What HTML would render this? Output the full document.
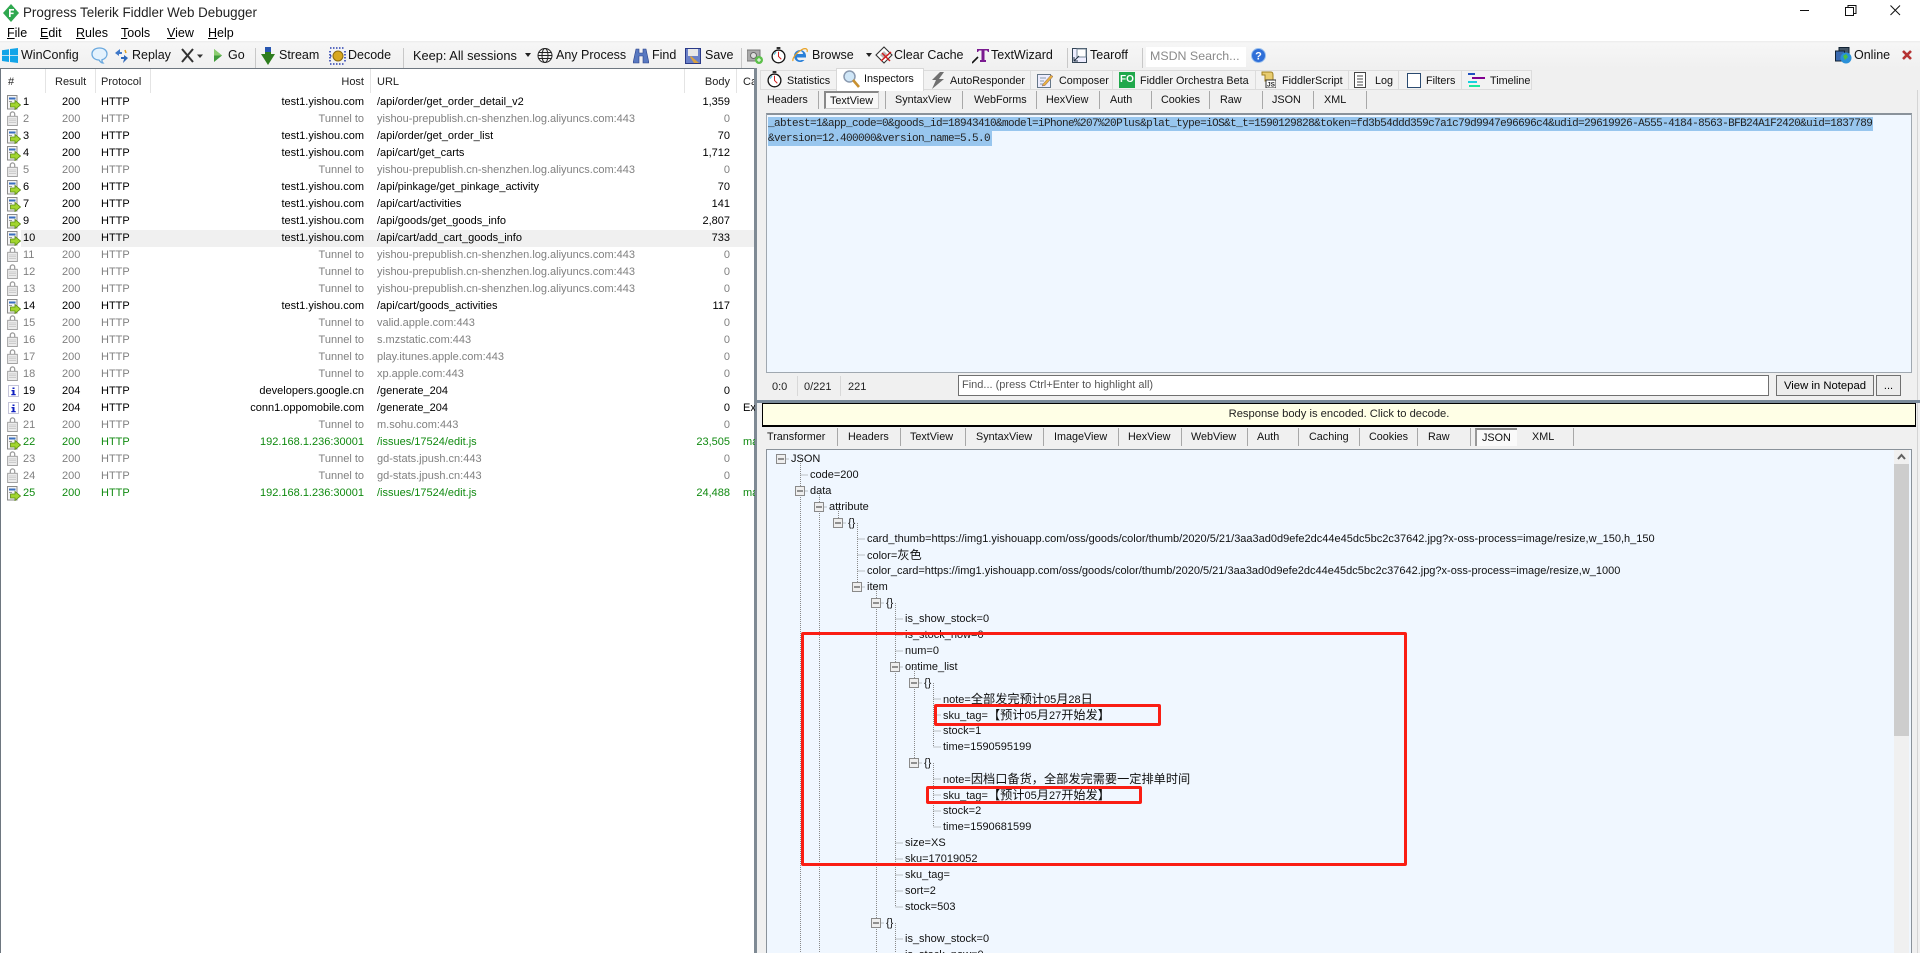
<!DOCTYPE html>
<html><head><meta charset="utf-8"><title>Progress Telerik Fiddler Web Debugger</title>
<style>
html,body{margin:0;padding:0;background:#fff;width:1920px;height:953px;overflow:hidden}
body{position:relative;font:11px/16px "Liberation Sans","Noto Sans CJK SC",sans-serif;color:#000}
div,span,svg{position:absolute}
i{font-style:normal;font-size:12.200px}
u{text-decoration:underline}
.t{white-space:nowrap;height:16px}
.tb{font-size:12.5px;color:#111;top:47px;white-space:nowrap}
.m{font-size:12.5px;top:25px;white-space:nowrap}
.tab{font-size:10.8px;top:73px;white-space:nowrap;color:#111}
.st{font-size:10.8px;top:92px;white-space:nowrap;color:#111}
.rt{font-size:10.8px;top:429px;white-space:nowrap;color:#111}
.sep{width:1px;background:#a8a8a8}
.tsep{width:1px;background:#c8c8c8;top:48px;height:20px}
.hs{top:69px;width:1px;height:24px;background:#e4e4e4}
.hd{top:74px;white-space:nowrap;color:#222}
.r{left:0;width:755px;height:17px;line-height:17px;white-space:nowrap}
.r span{top:0}
.n{left:23px}.c{left:62px}.p{left:101px}.h{right:391px}.u{left:377px}.b{right:25px}.x{left:743px;width:12px;overflow:hidden}
.g{color:#808080}.v{color:#108a10}
.l{white-space:nowrap;font-size:11px;color:#111}
.hl{background:#98c6ee}
.mono{font:11px/14px "Liberation Mono",monospace;letter-spacing:-.6px;white-space:nowrap;color:#222}
.red{border:3px solid #fa1e14;border-radius:2px;box-sizing:border-box}
</style></head><body>

<svg width="0" height="0" style="left:0;top:0">
<defs>
<symbol id="doc" viewBox="0 0 14 15"><rect x=".5" y=".5" width="9.500" height="13.500" fill="#f4f4f4" stroke="#8a8a8a"/><rect x="2" y="2.500" width="6.500" height="2" fill="#3a6fc0"/><rect x="2" y="6" width="3" height="1" fill="#999"/><path d="M3.500 8h4.500V5.500l5.500 4.500-5.500 4.500V12H3.500z" fill="#a2d62e" stroke="#5b8a12" stroke-width=".8"/></symbol>
<symbol id="lock" viewBox="0 0 12 17"><path d="M3.500 6V3.500a2.500 2.500 0 0 1 5 0V6" fill="none" stroke="#999" stroke-width="1.4"/><rect x=".5" y="6" width="11" height="10.5" fill="#ececec" stroke="#999"/><path d="M2 9h8M2 11h8M2 13h8" stroke="#c8c8c8"/></symbol>
<symbol id="info" viewBox="0 0 11 12"><rect x=".5" y=".5" width="10" height="11" fill="#fff" stroke="#8a8ab0" stroke-dasharray="1 1"/><path d="M4.500 2.500h2v1.500h-2zM3.500 5h3v4h1.200v1.200H3.300V9h1.200V6.200h-1z" fill="#1020c0"/></symbol>
<symbol id="clock" viewBox="0 0 16 18"><rect x="6" y="0" width="4" height="2" fill="#222"/><circle cx="8" cy="10" r="6.800" fill="#fff" stroke="#111" stroke-width="1.400"/><path d="M8 5v5l3 3" fill="none" stroke="#d02020" stroke-width="1.100"/><path d="M3.500 8a5 5 0 0 1 2-2.500" stroke="#30b0d0" fill="none"/></symbol>
</defs>
</svg>

<!-- title bar -->
<svg style="left:2px;top:4px" width="18" height="18" viewBox="0 0 18 18"><path d="M9 0l8 9-8 9-8-9z" fill="#2fa84f"/><path d="M7 5h5v1.600H8.700v2H11.600v1.500H8.700V13H7z" fill="#fff"/></svg>
<div class="t" style="left:23px;font-size:13.400px;color:#222;top:5px">Progress Telerik Fiddler Web Debugger</div>
<svg style="left:1795px;top:0" width="115" height="22" viewBox="0 0 115 22" fill="none" stroke="#111"><path d="M5 10.500h9"/><path d="M50.500 7.500h8v8h-8zM53 7.500V5.500h8v8h-2.500"/><path d="M95.500 5.500l9.500 9.500M105 5.500L95.500 15"/></svg>

<!-- menu -->
<div class="m" style="left:7px"><u>F</u>ile</div>
<div class="m" style="left:40px"><u>E</u>dit</div>
<div class="m" style="left:76px"><u>R</u>ules</div>
<div class="m" style="left:121px"><u>T</u>ools</div>
<div class="m" style="left:167px"><u>V</u>iew</div>
<div class="m" style="left:208px"><u>H</u>elp</div>

<!-- toolbar background -->
<div style="left:0;top:41px;width:1920px;height:28px;background:linear-gradient(#ececec,#f6f6f6 8%,#f0f0f0)"></div>

<svg style="left:2px;top:48px" width="16" height="15" viewBox="0 0 16 15"><path d="M0 2.200l7-1v6H0zM8 1l8-1v7.200H8zM0 8h7v6l-7-1zM8 8h8v7l-8-1z" fill="#12a4e8"/></svg>
<div class="tb" style="left:21px">WinConfig</div>
<svg style="left:91px;top:47px" width="17" height="18" viewBox="0 0 17 18"><path d="M8.500 1C4 1 1 3.500 1 7s3 6 7 6c1 1.500 2.500 3 4 3-1-1-1.200-2-1-3.300 3-.8 5-3 5-5.700 0-3.500-3-6-7.500-6z" fill="#e4f2fd" stroke="#6aa8de" stroke-width="1.300"/></svg>
<svg style="left:114px;top:48px" width="15" height="16" viewBox="0 0 15 16"><path d="M6 1L1 5l4 3V6h3V4H6z" fill="#3f78c8"/><path d="M9 15l5-5-4-3v2H7v2h3z" fill="#2f68b8"/><path d="M11 2l1 3" stroke="#e0a020" stroke-width="1.500"/></svg>
<div class="tb" style="left:132px">Replay</div>
<svg style="left:181px;top:48px" width="24" height="15" viewBox="0 0 24 15"><path d="M1 1l11 13M12 1L1 14" stroke="#333" stroke-width="2"/><path d="M16 6.500h6l-3 3.500z" fill="#333"/></svg>
<svg style="left:214px;top:49px" width="8" height="13" viewBox="0 0 8 13"><path d="M0 0l8 6.500-8 6.500z" fill="#3f9a3a"/><path d="M0 0l8 6.500H0z" fill="#8ccd70"/></svg>
<div class="tb" style="left:228px">Go</div>
<div class="tsep" style="left:255px"></div>
<svg style="left:261px;top:47px" width="14" height="18" viewBox="0 0 14 18"><path d="M4 0h6v7h4l-7 11-7-11h4z" fill="#2e7d1e"/><path d="M4 0h6v5H4z" fill="#2856b0"/></svg>
<div class="tb" style="left:279px">Stream</div>
<svg style="left:329px;top:47px" width="17" height="18" viewBox="0 0 17 18"><path d="M1 1h15M1 17h15M1 4v11M16 4v11M1 9h4" stroke="#2a40b0" stroke-width="1.600" stroke-dasharray="1.500 1.500" fill="none"/><circle cx="9" cy="9" r="5" fill="#d8a820" stroke="#8a6a10"/></svg>
<div class="tb" style="left:348px">Decode</div>
<div class="tsep" style="left:403px"></div>
<div class="tb" style="left:413px;top:48px;font-size:12.800px">Keep: All sessions</div>
<svg style="left:525px;top:53px" width="6" height="5" viewBox="0 0 6 5"><path d="M0 0h6L3 4z" fill="#222"/></svg>
<svg style="left:537px;top:47px" width="16" height="17" viewBox="0 0 16 17" fill="none" stroke="#222"><circle cx="8" cy="8.500" r="7"/><ellipse cx="8" cy="8.500" rx="3" ry="7"/><path d="M1 8.500h14M2 5.500h12M2 11.500h12"/></svg>
<div class="tb" style="left:556px">Any Process</div>
<svg style="left:633px;top:48px" width="16" height="16" viewBox="0 0 16 16"><path d="M3 1h3v4h4V1h3l3 14h-6V8H6v7H0z" fill="#5878c0" stroke="#2a4088" stroke-width=".6"/></svg>
<div class="tb" style="left:652px">Find</div>
<svg style="left:685px;top:48px" width="16" height="16" viewBox="0 0 16 16"><rect x=".5" y=".5" width="15" height="15" fill="#6a80c8" stroke="#2a3a88"/><rect x="3" y="1" width="10" height="7" fill="#e8e8e8"/><path d="M6 8l8 7H9L5 9z" fill="#d8a040"/></svg>
<div class="tb" style="left:705px">Save</div>
<div class="tsep" style="left:741px"></div>
<svg style="left:747px;top:48px" width="16" height="16" viewBox="0 0 16 16"><rect x="0" y="2" width="13" height="11" fill="#aaa" stroke="#777"/><circle cx="6.500" cy="7.500" r="3" fill="#ddd" stroke="#666"/><circle cx="12" cy="12" r="4" fill="#5cc04a"/><path d="M10 12h4M12 10v4" stroke="#fff"/></svg>
<svg style="left:771px;top:47px" width="15" height="17"><use href="#clock"/></svg>
<svg style="left:792px;top:47px" width="16" height="17" viewBox="0 0 16 17"><path d="M14 8.500a6 6 0 1 0-1.500 4.500h-3a3 3 0 0 1-4.500-2.500h9zM5 7a3 3 0 0 1 6 0z" fill="#2a80d8" fill-rule="evenodd"/><path d="M1 14c-1-3 4-9 10-12 3-1 5 0 4 3" fill="none" stroke="#e8a020" stroke-width="1.200"/></svg>
<div class="tb" style="left:812px">Browse</div>
<svg style="left:866px;top:53px" width="6" height="5" viewBox="0 0 6 5"><path d="M0 0h6L3 4z" fill="#222"/></svg>
<svg style="left:875px;top:46px" width="18" height="18" viewBox="0 0 18 18"><path d="M9 1l8 8-8 8-8-8z" fill="#fff" stroke="#333" stroke-width="1.100"/><path d="M5 9l4-4 4 4-4 4z" fill="#bbb"/><path d="M6 15L16 6M7 7l8 8" stroke="#d02020" stroke-width="1.500"/></svg>
<div class="tb" style="left:894px">Clear Cache</div>
<svg style="left:972px;top:47px" width="17" height="17" viewBox="0 0 17 17"><path d="M5 2h12v3h-1l-1-1.500h-2.500V13H14v2H8v-2h1.500V3.500H7L6 5H5z" fill="#7a1a90"/><path d="M0 16l6-6" stroke="#111" stroke-width="1.600"/></svg>
<div class="tb" style="left:991px">TextWizard</div>
<div class="tsep" style="left:1067px"></div>
<svg style="left:1072px;top:48px" width="15" height="15" viewBox="0 0 15 15"><rect x=".5" y=".5" width="14" height="14" fill="#eef" stroke="#345"/><rect x="5" y="1" width="9" height="8" fill="#fff" stroke="#789"/><path d="M2 13l5-5M2 9v4h4" stroke="#234" fill="none"/></svg>
<div class="tb" style="left:1090px">Tearoff</div>
<div class="tsep" style="left:1142px"></div>
<div style="left:1146px;top:47px;width:100px;height:20px;background:#fff"></div>
<div class="tb" style="left:1150px;color:#8a8a8a;top:48px;font-size:12.400px">MSDN Search...</div>
<svg style="left:1251px;top:48px" width="15" height="15" viewBox="0 0 15 15"><circle cx="7.500" cy="7.500" r="7" fill="#2f6fd8" stroke="#9ac0ee"/><text x="7.500" y="11.500" text-anchor="middle" font-family="Liberation Sans" font-weight="bold" font-size="11" fill="#fff">?</text></svg>
<svg style="left:1835px;top:47px" width="17" height="17" viewBox="0 0 17 17"><rect x="4" y="0.500" width="10" height="12" fill="#456" stroke="#123"/><rect x="0.500" y="4" width="9" height="10" fill="#3a6ab0" stroke="#123"/><circle cx="11" cy="11" r="5.500" fill="#2a90d8"/><path d="M8 9l3-2 2 3-3 3z" fill="#4cc040"/></svg>
<div class="tb" style="left:1854px">Online</div>
<svg style="left:1902px;top:50px" width="10" height="10" viewBox="0 0 10 10"><path d="M1 1l8 8M9 1L1 9" stroke="#b53333" stroke-width="2.600"/></svg>

<!-- session list -->
<div style="left:0;top:68px;width:755px;height:885px;background:#fff;border-top:1px solid #6e7780;border-left:1px solid #6e7780;box-sizing:border-box"></div>
<div style="left:754px;top:68px;width:3px;height:885px;background:#7f8a94"></div>
<div class="hd" style="left:8px">#</div><div class="hs" style="left:45px"></div>
<div class="hd" style="left:55px">Result</div><div class="hs" style="left:95px"></div>
<div class="hd" style="left:101px">Protocol</div><div class="hs" style="left:150px"></div>
<div class="hd" style="right:1556px">Host</div><div class="hs" style="left:370px"></div>
<div class="hd" style="left:377px">URL</div><div class="hs" style="left:684px"></div>
<div class="hd" style="right:1190px">Body</div><div class="hs" style="left:736px"></div>
<div class="hd" style="left:743px;width:11px;overflow:hidden">Ca</div>

<div style="left:21px;top:230px;width:733px;height:17px;background:#f0f0f0"></div>

<svg style="left:7px;top:95px" width="14" height="15"><use href="#doc"/></svg><svg style="left:7px;top:111px" width="11" height="15"><use href="#lock"/></svg><svg style="left:7px;top:129px" width="14" height="15"><use href="#doc"/></svg><svg style="left:7px;top:146px" width="14" height="15"><use href="#doc"/></svg><svg style="left:7px;top:162px" width="11" height="15"><use href="#lock"/></svg><svg style="left:7px;top:180px" width="14" height="15"><use href="#doc"/></svg><svg style="left:7px;top:197px" width="14" height="15"><use href="#doc"/></svg><svg style="left:7px;top:214px" width="14" height="15"><use href="#doc"/></svg><svg style="left:7px;top:231px" width="14" height="15"><use href="#doc"/></svg><svg style="left:7px;top:247px" width="11" height="15"><use href="#lock"/></svg><svg style="left:7px;top:264px" width="11" height="15"><use href="#lock"/></svg><svg style="left:7px;top:281px" width="11" height="15"><use href="#lock"/></svg><svg style="left:7px;top:299px" width="14" height="15"><use href="#doc"/></svg><svg style="left:7px;top:315px" width="11" height="15"><use href="#lock"/></svg><svg style="left:7px;top:332px" width="11" height="15"><use href="#lock"/></svg><svg style="left:7px;top:349px" width="11" height="15"><use href="#lock"/></svg><svg style="left:7px;top:366px" width="11" height="15"><use href="#lock"/></svg><svg style="left:8px;top:385px" width="11" height="12"><use href="#info"/></svg><svg style="left:8px;top:402px" width="11" height="12"><use href="#info"/></svg><svg style="left:7px;top:417px" width="11" height="15"><use href="#lock"/></svg><svg style="left:7px;top:435px" width="14" height="15"><use href="#doc"/></svg><svg style="left:7px;top:451px" width="11" height="15"><use href="#lock"/></svg><svg style="left:7px;top:468px" width="11" height="15"><use href="#lock"/></svg><svg style="left:7px;top:486px" width="14" height="15"><use href="#doc"/></svg>

<div class="r" style="top:94px"><span class="n">1</span><span class="c">200</span><span class="p">HTTP</span><span class="h">test1.yishou.com</span><span class="u">/api/order/get_order_detail_v2</span><span class="b">1,359</span></div>
<div class="r g" style="top:111px"><span class="n">2</span><span class="c">200</span><span class="p">HTTP</span><span class="h">Tunnel to</span><span class="u">yishou-prepublish.cn-shenzhen.log.aliyuncs.com:443</span><span class="b">0</span></div>
<div class="r" style="top:128px"><span class="n">3</span><span class="c">200</span><span class="p">HTTP</span><span class="h">test1.yishou.com</span><span class="u">/api/order/get_order_list</span><span class="b">70</span></div>
<div class="r" style="top:145px"><span class="n">4</span><span class="c">200</span><span class="p">HTTP</span><span class="h">test1.yishou.com</span><span class="u">/api/cart/get_carts</span><span class="b">1,712</span></div>
<div class="r g" style="top:162px"><span class="n">5</span><span class="c">200</span><span class="p">HTTP</span><span class="h">Tunnel to</span><span class="u">yishou-prepublish.cn-shenzhen.log.aliyuncs.com:443</span><span class="b">0</span></div>
<div class="r" style="top:179px"><span class="n">6</span><span class="c">200</span><span class="p">HTTP</span><span class="h">test1.yishou.com</span><span class="u">/api/pinkage/get_pinkage_activity</span><span class="b">70</span></div>
<div class="r" style="top:196px"><span class="n">7</span><span class="c">200</span><span class="p">HTTP</span><span class="h">test1.yishou.com</span><span class="u">/api/cart/activities</span><span class="b">141</span></div>
<div class="r" style="top:213px"><span class="n">9</span><span class="c">200</span><span class="p">HTTP</span><span class="h">test1.yishou.com</span><span class="u">/api/goods/get_goods_info</span><span class="b">2,807</span></div>
<div class="r" style="top:230px"><span class="n">10</span><span class="c">200</span><span class="p">HTTP</span><span class="h">test1.yishou.com</span><span class="u">/api/cart/add_cart_goods_info</span><span class="b">733</span></div>
<div class="r g" style="top:247px"><span class="n">11</span><span class="c">200</span><span class="p">HTTP</span><span class="h">Tunnel to</span><span class="u">yishou-prepublish.cn-shenzhen.log.aliyuncs.com:443</span><span class="b">0</span></div>
<div class="r g" style="top:264px"><span class="n">12</span><span class="c">200</span><span class="p">HTTP</span><span class="h">Tunnel to</span><span class="u">yishou-prepublish.cn-shenzhen.log.aliyuncs.com:443</span><span class="b">0</span></div>
<div class="r g" style="top:281px"><span class="n">13</span><span class="c">200</span><span class="p">HTTP</span><span class="h">Tunnel to</span><span class="u">yishou-prepublish.cn-shenzhen.log.aliyuncs.com:443</span><span class="b">0</span></div>
<div class="r" style="top:298px"><span class="n">14</span><span class="c">200</span><span class="p">HTTP</span><span class="h">test1.yishou.com</span><span class="u">/api/cart/goods_activities</span><span class="b">117</span></div>
<div class="r g" style="top:315px"><span class="n">15</span><span class="c">200</span><span class="p">HTTP</span><span class="h">Tunnel to</span><span class="u">valid.apple.com:443</span><span class="b">0</span></div>
<div class="r g" style="top:332px"><span class="n">16</span><span class="c">200</span><span class="p">HTTP</span><span class="h">Tunnel to</span><span class="u">s.mzstatic.com:443</span><span class="b">0</span></div>
<div class="r g" style="top:349px"><span class="n">17</span><span class="c">200</span><span class="p">HTTP</span><span class="h">Tunnel to</span><span class="u">play.itunes.apple.com:443</span><span class="b">0</span></div>
<div class="r g" style="top:366px"><span class="n">18</span><span class="c">200</span><span class="p">HTTP</span><span class="h">Tunnel to</span><span class="u">xp.apple.com:443</span><span class="b">0</span></div>
<div class="r" style="top:383px"><span class="n">19</span><span class="c">204</span><span class="p">HTTP</span><span class="h">developers.google.cn</span><span class="u">/generate_204</span><span class="b">0</span></div>
<div class="r" style="top:400px"><span class="n">20</span><span class="c">204</span><span class="p">HTTP</span><span class="h">conn1.oppomobile.com</span><span class="u">/generate_204</span><span class="b">0</span><span class="x">Ex</span></div>
<div class="r g" style="top:417px"><span class="n">21</span><span class="c">200</span><span class="p">HTTP</span><span class="h">Tunnel to</span><span class="u">m.sohu.com:443</span><span class="b">0</span></div>
<div class="r v" style="top:434px"><span class="n">22</span><span class="c">200</span><span class="p">HTTP</span><span class="h">192.168.1.236:30001</span><span class="u">/issues/17524/edit.js</span><span class="b">23,505</span><span class="x">ma</span></div>
<div class="r g" style="top:451px"><span class="n">23</span><span class="c">200</span><span class="p">HTTP</span><span class="h">Tunnel to</span><span class="u">gd-stats.jpush.cn:443</span><span class="b">0</span></div>
<div class="r g" style="top:468px"><span class="n">24</span><span class="c">200</span><span class="p">HTTP</span><span class="h">Tunnel to</span><span class="u">gd-stats.jpush.cn:443</span><span class="b">0</span></div>
<div class="r v" style="top:485px"><span class="n">25</span><span class="c">200</span><span class="p">HTTP</span><span class="h">192.168.1.236:30001</span><span class="u">/issues/17524/edit.js</span><span class="b">24,488</span><span class="x">ma</span></div>

<!-- right panel -->
<div style="left:757px;top:68px;width:1163px;height:885px;background:#f0f0f0"></div>
<div style="left:1917px;top:90px;width:1px;height:863px;background:#d4d4d4"></div>
<div style="left:760px;top:70px;width:772px;height:20px;background:#f2f2f2;border:1px solid #dcdcdc;box-sizing:border-box"></div>
<div style="left:836px;top:68px;width:88px;height:23px;background:#fff;border:1px solid #d8d8d8;border-bottom:0;box-sizing:border-box"></div>
<div class="sep" style="left:1030px;top:71px;height:18px;background:#dcdcdc"></div><div class="sep" style="left:1112px;top:71px;height:18px;background:#dcdcdc"></div><div class="sep" style="left:1255px;top:71px;height:18px;background:#dcdcdc"></div><div class="sep" style="left:1348px;top:71px;height:18px;background:#dcdcdc"></div><div class="sep" style="left:1398px;top:71px;height:18px;background:#dcdcdc"></div><div class="sep" style="left:1461px;top:71px;height:18px;background:#dcdcdc"></div>

<svg style="left:767px;top:71px" width="15" height="17"><use href="#clock"/></svg>
<div class="tab" style="left:787px">Statistics</div>
<svg style="left:843px;top:70px" width="17" height="18" viewBox="0 0 17 18"><circle cx="6.500" cy="6.500" r="5.500" fill="#cfe6f7" stroke="#8a9ab0" stroke-width="1.500"/><path d="M10 10l6 7" stroke="#c89030" stroke-width="2.600"/></svg>
<div class="tab" style="left:864px;top:71px">Inspectors</div>
<svg style="left:931px;top:72px" width="14" height="17" viewBox="0 0 14 17"><path d="M9 0L1 8h4L1 17l12-10H8l5-7z" fill="#707070"/></svg>
<div class="tab" style="left:950px">AutoResponder</div>
<svg style="left:1037px;top:73px" width="16" height="15" viewBox="0 0 16 15"><rect x=".5" y="1.500" width="13" height="13" fill="#eef" stroke="#678"/><path d="M3 5h6M3 8h4M3 11h3" stroke="#89a"/><path d="M6 11l8-9 2 1.500-8 9-3 .5z" fill="#e8b040" stroke="#866"  stroke-width=".5"/></svg>
<div class="tab" style="left:1059px">Composer</div>
<div style="left:1119px;top:72px;width:16px;height:16px;background:#1fa84b;color:#fff;font:bold 10px/16px 'Liberation Sans',sans-serif;text-align:center">FO</div>
<div class="tab" style="left:1140px">Fiddler Orchestra Beta</div>
<svg style="left:1261px;top:71px" width="15" height="17" viewBox="0 0 15 17"><path d="M1 1h9c2 0 2 2 2 3v6H4V4H1z" fill="#e8cc70" stroke="#a08020"/><rect x="5" y="9" width="10" height="8" fill="#fff" stroke="#333"/><text x="10" y="15.500" text-anchor="middle" font-family="Liberation Sans" font-weight="bold" font-size="6.500" fill="#222">JS</text></svg>
<div class="tab" style="left:1282px">FiddlerScript</div>
<svg style="left:1354px;top:72px" width="12" height="16" viewBox="0 0 12 16"><rect x=".5" y=".5" width="11" height="15" fill="#fff" stroke="#444"/><path d="M3 4h6M3 7h6M3 10h6M3 13h6" stroke="#444"/></svg>
<div class="tab" style="left:1375px">Log</div>
<svg style="left:1407px;top:73px" width="14" height="15"><rect x=".5" y=".5" width="13" height="14" fill="#fff" stroke="#2a4a70"/></svg>
<div class="tab" style="left:1426px">Filters</div>
<svg style="left:1468px;top:73px" width="17" height="14"><rect x="0" y="0" width="7" height="2" fill="#2050c0"/><rect x="4" y="4" width="13" height="2" fill="#800090"/><rect x="0" y="8" width="9" height="2" fill="#18d0e0"/><rect x="1" y="12" width="11" height="2" fill="#18e8a0"/></svg>
<div class="tab" style="left:1490px">Timeline</div>

<!-- sub tabs -->
<div class="st" style="left:767px">Headers</div><div class="sep" style="left:818px;top:91px;height:18px"></div>
<div style="left:824px;top:91px;width:55px;height:18px;background:#f8f8f8;border:2px solid #888;border-right:1px solid #ccc;border-bottom:1px solid #ccc;box-sizing:border-box"></div>
<div class="st" style="left:830px;top:93px">TextView</div><div class="sep" style="left:885px;top:91px;height:18px"></div>
<div class="st" style="left:895px">SyntaxView</div><div class="sep" style="left:962px;top:91px;height:18px"></div>
<div class="st" style="left:974px">WebForms</div><div class="sep" style="left:1036px;top:91px;height:18px"></div>
<div class="st" style="left:1046px">HexView</div><div class="sep" style="left:1099px;top:91px;height:18px"></div>
<div class="st" style="left:1110px">Auth</div><div class="sep" style="left:1151px;top:91px;height:18px"></div>
<div class="st" style="left:1161px">Cookies</div><div class="sep" style="left:1209px;top:91px;height:18px"></div>
<div class="st" style="left:1220px">Raw</div><div class="sep" style="left:1262px;top:91px;height:18px"></div>
<div class="st" style="left:1272px">JSON</div><div class="sep" style="left:1313px;top:91px;height:18px"></div>
<div class="st" style="left:1324px">XML</div><div class="sep" style="left:1366px;top:91px;height:18px"></div>

<!-- request text -->
<div style="left:766px;top:113px;width:1146px;height:260px;background:#f0f7ff;border:1px solid #a0a8b0;border-top:2px solid #8a929a;box-sizing:border-box"></div>
<div class="hl" style="left:768px;top:117px;width:1105px;height:14px"></div>
<div class="hl" style="left:768px;top:131px;width:224px;height:15px"></div>
<div class="mono" style="left:768px;top:117px">_abtest=1&amp;app_code=0&amp;goods_id=18943410&amp;model=iPhone%207%20Plus&amp;plat_type=iOS&amp;t_t=1590129828&amp;token=fd3b54ddd359c7a1c79d9947e96696c4&amp;udid=29619926-A555-4184-8563-BFB24A1F2420&amp;uid=1837789</div>
<div class="mono" style="left:768px;top:132px">&amp;version=12.400000&amp;version_name=5.5.0</div>

<!-- status row -->
<div class="t" style="left:772px;top:379px;color:#222">0:0</div><div class="sep" style="left:797px;top:376px;height:20px;background:#d8d8d8"></div>
<div class="t" style="left:804px;top:379px;color:#222">0/221</div><div class="sep" style="left:840px;top:376px;height:20px;background:#d8d8d8"></div>
<div class="t" style="left:848px;top:379px;color:#222">221</div>
<div style="left:958px;top:375px;width:811px;height:21px;background:#fff;border:1px solid #707070;box-sizing:border-box"></div>
<div class="t" style="left:962px;top:377px;color:#555">Find... (press Ctrl+Enter to highlight all)</div>
<div style="left:1776px;top:375px;width:98px;height:21px;background:#ececec;border:1px solid #707070;box-sizing:border-box;text-align:center;line-height:20px;font-size:11.300px;white-space:nowrap">View in Notepad</div>
<div style="left:1876px;top:375px;width:25px;height:21px;background:#ececec;border:1px solid #707070;box-sizing:border-box;text-align:center;line-height:20px">...</div>

<!-- splitter & yellow -->
<div style="left:757px;top:400px;width:1163px;height:3px;background:#7a8a9a"></div>
<div style="left:762px;top:403px;width:1154px;height:24px;background:#ffffe6;border:1px solid #000;border-bottom-width:2px;box-sizing:border-box;text-align:center;line-height:21px;color:#222;font-size:11.200px">Response body is encoded. Click to decode.</div>

<!-- response tabs -->
<div class="rt" style="left:767px">Transformer</div><div class="sep" style="left:837px;top:428px;height:18px"></div>
<div class="rt" style="left:848px">Headers</div><div class="sep" style="left:900px;top:428px;height:18px"></div>
<div class="rt" style="left:910px">TextView</div><div class="sep" style="left:965px;top:428px;height:18px"></div>
<div class="rt" style="left:976px">SyntaxView</div><div class="sep" style="left:1043px;top:428px;height:18px"></div>
<div class="rt" style="left:1054px">ImageView</div><div class="sep" style="left:1118px;top:428px;height:18px"></div>
<div class="rt" style="left:1128px">HexView</div><div class="sep" style="left:1181px;top:428px;height:18px"></div>
<div class="rt" style="left:1191px">WebView</div><div class="sep" style="left:1247px;top:428px;height:18px"></div>
<div class="rt" style="left:1257px">Auth</div><div class="sep" style="left:1298px;top:428px;height:18px"></div>
<div class="rt" style="left:1309px">Caching</div><div class="sep" style="left:1359px;top:428px;height:18px"></div>
<div class="rt" style="left:1369px">Cookies</div><div class="sep" style="left:1417px;top:428px;height:18px"></div>
<div class="rt" style="left:1428px">Raw</div><div class="sep" style="left:1470px;top:428px;height:18px"></div>
<div style="left:1475px;top:428px;width:42px;height:18px;background:#fafafa;border-top:2px solid #888;border-left:2px solid #999;box-sizing:border-box"></div>
<div class="rt" style="left:1482px;top:430px">JSON</div>
<div class="rt" style="left:1532px">XML</div><div class="sep" style="left:1573px;top:428px;height:18px"></div>

<!-- tree box -->
<div style="left:766px;top:449px;width:1146px;height:504px;background:#f0f7ff;border:1px solid #8a929a;border-bottom:0;box-sizing:border-box"></div>
<div style="left:1894px;top:450px;width:15px;height:503px;background:#f0f0f0"></div>
<div style="left:1894px;top:464px;width:15px;height:272px;background:#cdcdcd"></div>
<svg style="left:1897px;top:453px" width="9" height="8" viewBox="0 0 9 8"><path d="M1 6l3.500-4L8 6" fill="none" stroke="#606060" stroke-width="2"/></svg>

<svg style="left:0;top:0" width="1920" height="953" fill="none">
<g stroke="#8a8a8a" stroke-dasharray="1 1">
<path d="M781.500 459h8M800.500 459v494M800.500 475h8M800.500 491h8M819.500 491v462M819.500 507h8M838.500 507v16M838.500 523h8M857.500 523v64M857.500 539h8M857.500 555h8M857.500 571h8M857.500 587h8M876.500 587v366M876.500 603h8M876.500 923h8M895.500 603v304M895.500 619h8M895.500 635h8M895.500 651h8M895.500 667h8M895.500 843h8M895.500 859h8M895.500 875h8M895.500 891h8M895.500 907h8M914.500 667v96M914.500 683h8M914.500 763h8M933.500 683v64M933.500 699h8M933.500 715h8M933.500 731h8M933.500 747h8M933.500 763v64M933.500 779h8M933.500 795h8M933.500 811h8M933.500 827h8M895.500 923v30M895.500 939h8M895.500 955h8"/>
</g>
<g fill="#eeeeee" stroke="#8a8a8a">
<rect x="776.500" y="454.500" width="9" height="9"/><rect x="795.500" y="486.500" width="9" height="9"/><rect x="814.500" y="502.500" width="9" height="9"/><rect x="833.500" y="518.500" width="9" height="9"/><rect x="852.500" y="582.500" width="9" height="9"/><rect x="871.500" y="598.500" width="9" height="9"/><rect x="890.500" y="662.500" width="9" height="9"/><rect x="909.500" y="678.500" width="9" height="9"/><rect x="909.500" y="758.500" width="9" height="9"/><rect x="871.500" y="918.500" width="9" height="9"/>
</g>
<path stroke="#333" d="M778 459h6M797 491h6M816 507h6M835 523h6M854 587h6M873 603h6M892 667h6M911 683h6M911 763h6M873 923h6"/>
</svg>

<div class="l" style="left:791px;top:451px">JSON</div>
<div class="l" style="left:810px;top:467px">code=200</div>
<div class="l" style="left:810px;top:483px">data</div>
<div class="l" style="left:829px;top:499px">attribute</div>
<div class="l" style="left:848px;top:515px">{}</div>
<div class="l" style="left:867px;top:531px">card_thumb=https://img1.yishouapp.com/oss/goods/color/thumb/2020/5/21/3aa3ad0d9efe2dc44e45dc5bc2c37642.jpg?x-oss-process=image/resize,w_150,h_150</div>
<div class="l" style="left:867px;top:547px">color=<i>灰色</i></div>
<div class="l" style="left:867px;top:563px">color_card=https://img1.yishouapp.com/oss/goods/color/thumb/2020/5/21/3aa3ad0d9efe2dc44e45dc5bc2c37642.jpg?x-oss-process=image/resize,w_1000</div>
<div class="l" style="left:867px;top:579px">item</div>
<div class="l" style="left:886px;top:595px">{}</div>
<div class="l" style="left:905px;top:611px">is_show_stock=0</div>
<div class="l" style="left:905px;top:627px">is_stock_now=0</div>
<div class="l" style="left:905px;top:643px">num=0</div>
<div class="l" style="left:905px;top:659px">ontime_list</div>
<div class="l" style="left:924px;top:675px">{}</div>
<div class="l" style="left:943px;top:691px">note=<i>全部发完预计</i>05<i>月</i>28<i>日</i></div>
<div class="l" style="left:943px;top:707px">sku_tag=<i>【预计</i>05<i>月</i>27<i>开始发】</i></div>
<div class="l" style="left:943px;top:723px">stock=1</div>
<div class="l" style="left:943px;top:739px">time=1590595199</div>
<div class="l" style="left:924px;top:755px">{}</div>
<div class="l" style="left:943px;top:771px">note=<i>因档口备货，全部发完需要一定排单时间</i></div>
<div class="l" style="left:943px;top:787px">sku_tag=<i>【预计</i>05<i>月</i>27<i>开始发】</i></div>
<div class="l" style="left:943px;top:803px">stock=2</div>
<div class="l" style="left:943px;top:819px">time=1590681599</div>
<div class="l" style="left:905px;top:835px">size=XS</div>
<div class="l" style="left:905px;top:851px">sku=17019052</div>
<div class="l" style="left:905px;top:867px">sku_tag=</div>
<div class="l" style="left:905px;top:883px">sort=2</div>
<div class="l" style="left:905px;top:899px">stock=503</div>
<div class="l" style="left:886px;top:915px">{}</div>
<div class="l" style="left:905px;top:931px">is_show_stock=0</div>
<div class="l" style="left:905px;top:947px">is_stock_now=0</div>

<!-- red annotations -->
<div class="red" style="left:801px;top:632px;width:606px;height:234px"></div>
<div class="red" style="left:934px;top:704px;width:227px;height:22px"></div>
<div class="red" style="left:926px;top:786px;width:216px;height:18px"></div>
</body></html>
